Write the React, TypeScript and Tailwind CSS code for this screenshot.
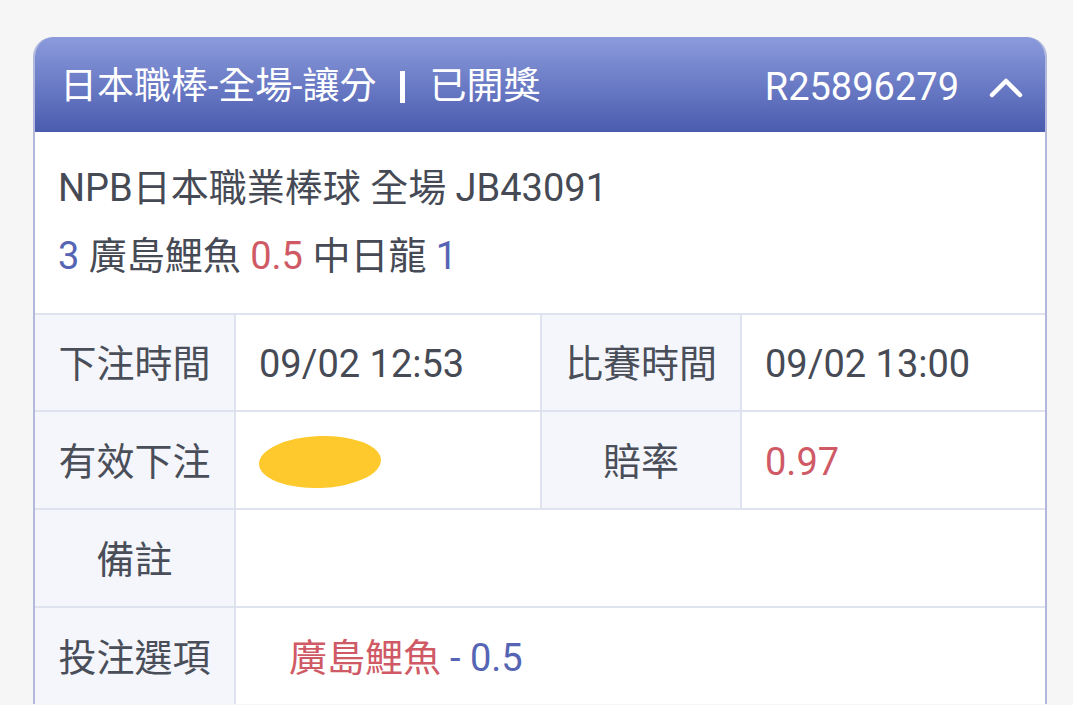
import React from 'react'

const font = { fontFamily: 'Roboto, "Noto Sans CJK TC", sans-serif' }

const Label = ({ children }: { children: React.ReactNode }) => (
  <div className="flex items-center justify-center bg-[#f4f6fb] pt-[4px] text-[#4a4e59]">{children}</div>
)

const Value = ({ children, className = '' }: { children?: React.ReactNode; className?: string }) => (
  <div className={`flex items-center bg-white pt-[4px] pl-[23px] ${className}`}>{children}</div>
)

export default function App() {
  return (
    <div className="h-[705px] overflow-hidden bg-[#f6f6f6] pt-[37px] pl-[33px]" style={font}>
      <div className="w-[1014px] overflow-hidden rounded-t-[20px] border-x-2 border-[#b3b9dc] bg-white">
        {/* header */}
        <div className="flex h-[95px] items-center justify-between bg-gradient-to-b from-[#8c9bdc] to-[#4b5bae] pt-[5px] pl-[25px] pr-[22px] text-[37px] text-white">
          <div className="flex items-center">
            <span>日本職棒-全場-讓分</span>
            <span className="mx-[24px] inline-block h-[32px] w-[5px] bg-white" />
            <span>已開獎</span>
          </div>
          <div className="flex items-center gap-[30px]">
            <span className="text-[38px]">R25896279</span>
            <svg width="34" height="22" viewBox="0 0 34 22" fill="none">
              <path d="M3 19 L17 5 L31 19" stroke="white" strokeWidth="4.5" strokeLinecap="round" strokeLinejoin="round" />
            </svg>
          </div>
        </div>

        {/* match info */}
        <div className="flex h-[181px] flex-col justify-center gap-[26px] pl-[23px] pb-[2px] text-[38px] text-[#464a55]">
          <div className="leading-[42px]">NPB日本職業棒球 全場 JB43091</div>
          <div className="leading-[42px]">
            <span className="text-[#5565b4]">3</span> 廣島鯉魚{' '}
            <span className="text-[#cf5a66]">0.5</span> 中日龍{' '}
            <span className="text-[#5565b4]">1</span>
          </div>
        </div>

        {/* detail table */}
        <div className="grid grid-cols-[199px_304px_198px_1fr] grid-rows-[95px_96px_96px_96px] gap-[2px] border-t-2 border-[#dfe3f0] bg-[#dfe3f0] text-[38px] text-[#464a55]">
          <Label>下注時間</Label>
          <Value>09/02 12:53</Value>
          <Label>比賽時間</Label>
          <Value>09/02 13:00</Value>

          <Label>有效下注</Label>
          <Value>
            <div className="h-[52px] w-[122px] -rotate-2 rounded-[50%] bg-[#fdc92c]" />
          </Value>
          <Label>賠率</Label>
          <Value className="text-[#cf5a66]">0.97</Value>

          <Label>備註</Label>
          <Value className="col-span-3" />

          <Label>投注選項</Label>
          <Value className="col-span-3 pl-[53px]">
            <span className="text-[#cf5a66]">廣島鯉魚</span>
            <span className="ml-[9px] text-[#5565b4]">- 0.5</span>
          </Value>
        </div>
      </div>
    </div>
  )
}
